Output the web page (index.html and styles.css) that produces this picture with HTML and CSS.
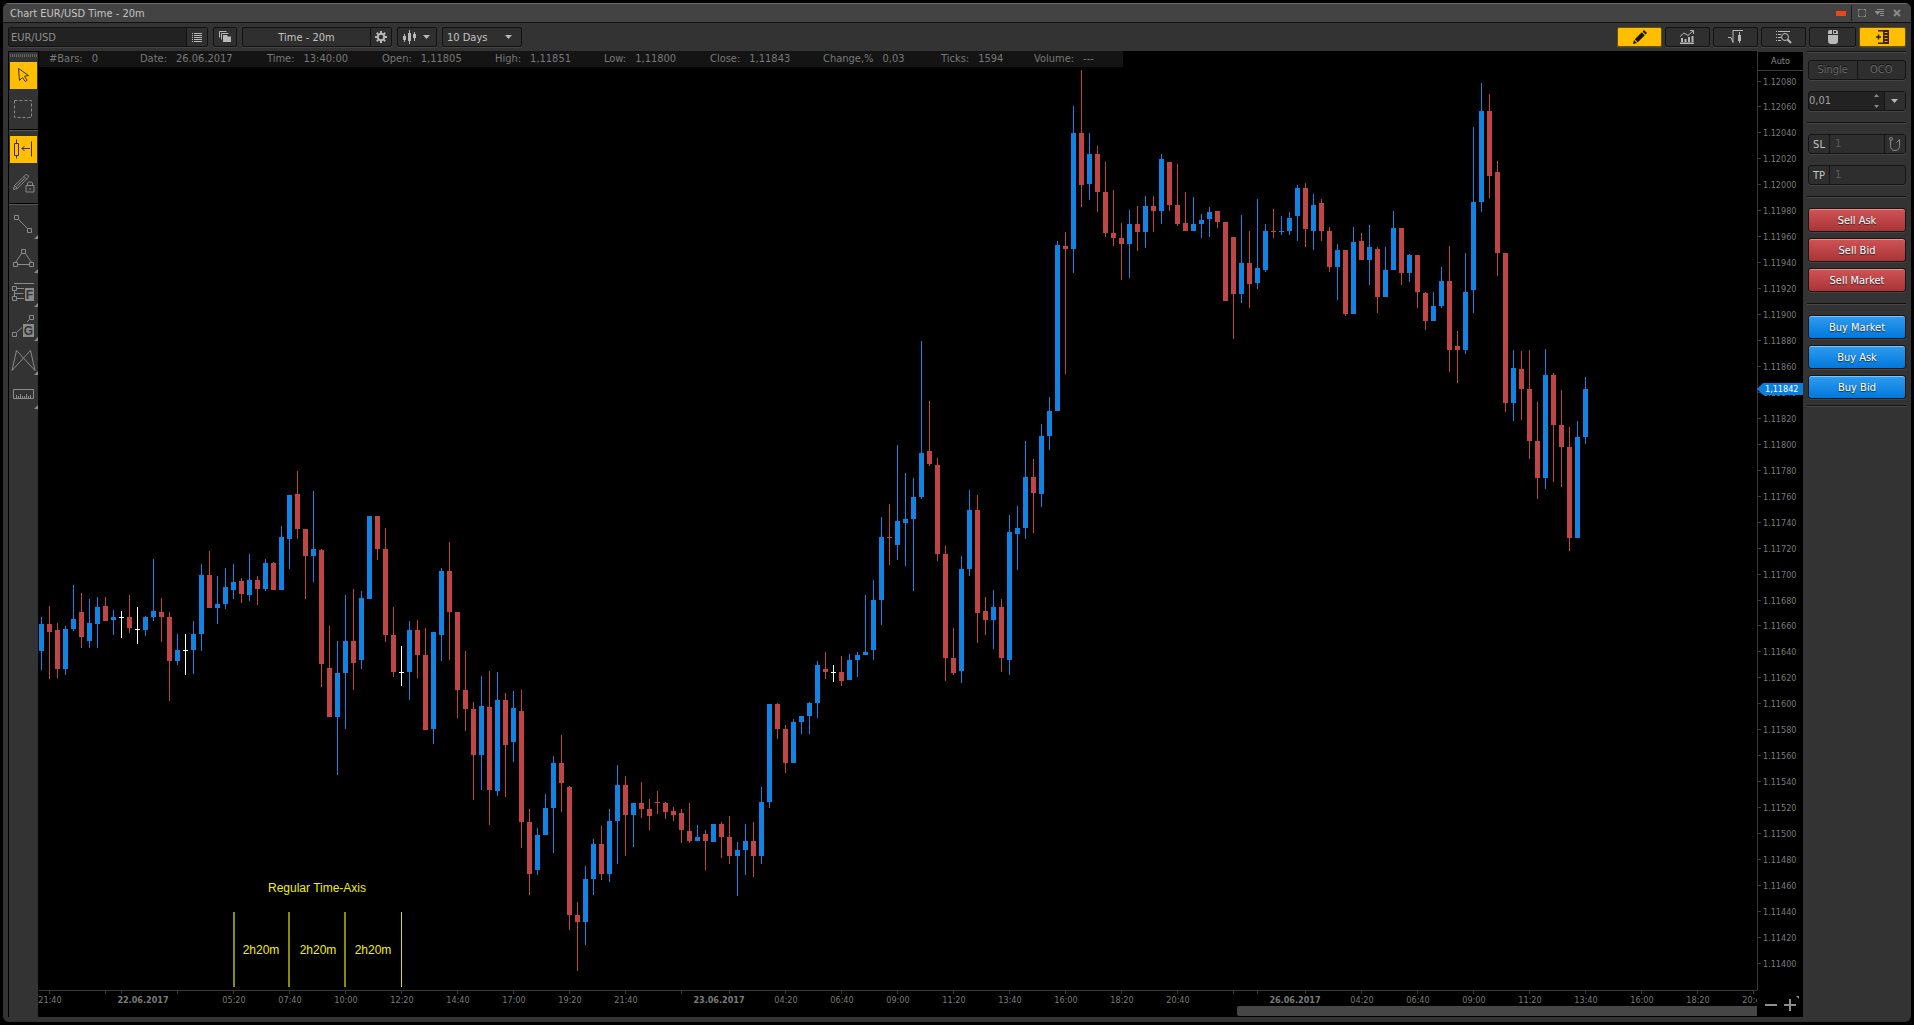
FILE: index.html
```html
<!DOCTYPE html>
<html lang="en">
<head>
<meta charset="utf-8">
<title>Chart EUR/USD Time - 20m</title>
<link rel="stylesheet" href="styles.css">
</head>
<body>
<div class="window">
  <header class="titlebar">
    <h1 class="title">Chart EUR/USD Time - 20m</h1>
    <div class="window-controls">
      <span class="link-color"></span>
      <button class="win-btn first" aria-label="Maximize"><svg width="8" height="8"><path d="M.5 2.500V.5h2M5.500.5h2v2M7.500 5.500v2h-2M2.500 7.500h-2v-2" class="line"/><path d="M3.500.5h1M3.500 7.500h1M.5 3.500v1M7.500 3.500v1" class="line"/></svg></button>
      <button class="win-btn menu" aria-label="Menu"><svg width="9" height="8"><path d="M2 .5h7M0 2.500h9M5 4.500h4M5 6.500h4" class="line"/><path d="M0 3h5L2.500 6z" class="solid"/></svg></button>
      <button class="win-btn" aria-label="Close"><svg width="8" height="8"><path d="M1 1l6 6M7 1L1 7" class="line thick"/></svg></button>
    </div>
  </header>

  <div class="toolbar">
    <div class="group symbol">
      <input class="field" type="text" value="EUR/USD" aria-label="Instrument">
      <button class="seg narrow" aria-label="Instrument list"><svg width="10" height="9"><path d="M0 .5h1M2 .5h8M0 2.500h1M2 2.500h8M0 4.500h1M2 4.500h8M0 6.500h1M2 6.500h8M0 8.500h1M2 8.500h8" class="line lit"/></svg></button>
    </div>
    <button class="btn small" aria-label="Templates"><svg width="12" height="12"><path d="M.5 6.500v-6h7M2.500 8.500v-6h7" class="line lit"/><path d="M4 4h4l1 1.500h3V11H4z" class="solid lit"/></svg></button>
    <div class="group period">
      <button class="seg wide">Time - 20m</button>
      <button class="seg narrow" aria-label="Settings"><svg width="12" height="12"><circle cx="6" cy="6" r="3.200" class="ring"/><path d="M6 0v2M6 10v2M0 6h2M10 6h2M1.800 1.800l1.400 1.400M8.800 8.800l1.400 1.400M10.200 1.800L8.800 3.200M3.200 8.800l-1.400 1.400" class="ring"/></svg></button>
    </div>
    <button class="btn style" aria-label="Chart style"><svg width="14" height="14"><path d="M1.500 4v8M6.500 0v14M11.500 2v9" class="line lit"/><path d="M0 6h3v4H0zM5 3h3v8H5zM10 4h3v4h-3z" class="solid lit"/></svg><svg width="8" height="4"><path d="M0 0h7L3.500 4z" class="solid lit"/></svg></button>
    <div class="group range">
      <select class="select" aria-label="Range"><option>10 Days</option></select>
      <svg class="select-arrow" width="8" height="4"><path d="M0 0h7L3.500 4z" class="solid lit"/></svg>
    </div>
    <div class="toolbar-right">
      <button class="btn tool active" aria-label="Draw"><svg width="14" height="14"><path d="M0 14l1-4 3 3zM1.800 9.200l7-7 3 3-7 7zM9.600 1.500L11 0l3 3-1.500 1.400z" fill="#1a1400"/></svg></button>
      <button class="btn tool" aria-label="Indicators"><svg width="16" height="14"><path d="M0 13.500h14M2 8v4M5.500 9v3M9 7v5M12.500 6v6" class="line lit thick"/><path d="M0 6.500L4 3l4 2.500L13 1M10 .5h3.500V4" class="line lit"/></svg></button>
      <button class="btn tool" aria-label="Strategies"><svg width="16" height="14"><path d="M0 7.500h3l2 5V.5h10M11.500 2v11" class="line lit"/><path d="M10 5h3v6h-3z" class="solid lit"/></svg></button>
      <button class="btn tool" aria-label="Analysis"><svg width="16" height="14"><path d="M0 1.500h1M2 1.500h12M0 4.500h1M2 4.500h3M0 7.500h1M2 7.500h3M0 10.500h1M2 10.500h3" class="line lit"/><circle cx="9" cy="7" r="3.500" class="line lit"/><path d="M11.500 9.500L15 13" class="line lit thick"/></svg></button>
      <button class="btn tool" aria-label="Mouse trading"><svg width="10" height="14"><path d="M0 2q0-2 2-2h2v4H0zM5 0h3q2 0 2 2v2H5zM0 5h10v6q0 3-3 3H3q-3 0-3-3z" class="solid lit"/><path d="M6 1h2v2H6z" fill="#2e2e2e"/></svg></button>
      <button class="btn tool active" aria-label="Order panel"><svg width="14" height="14"><path d="M0 7h5M2.500 4.500v5M2 .8h7M2 13.200h7" stroke="#332600" stroke-width="1.500" fill="none"/><path d="M7 0h6v14H7z" fill="#332600"/><path d="M8.500 2.500h3M8.500 5.500h3M8.500 8.500h3M8.500 11.500h3" stroke="#ff9d00"/></svg></button>
    </div>
  </div>

  <main class="workspace">
    <nav class="palette" aria-label="Drawing tools">
      <span class="grip"></span>
      <button class="pick active" aria-label="Select"><svg width="27" height="27"><path d="M8.500 6.500l10 7-4 .8 2.700 4-2 1.200-2.700-4-3 3z" class="ink"/></svg></button>
      <button class="pick" aria-label="Marquee"><svg width="27" height="27"><rect x="4.500" y="4.500" width="17" height="17" class="line" stroke-dasharray="3 2"/></svg></button>
      <hr class="rule">
      <button class="pick active" aria-label="Shift candles"><svg width="27" height="27"><path d="M4.500 7.500h4v12h-4zM6.500 3.500v4M6.500 19.500v3M12 12.500h8M14.500 10l-2.500 2.500 2.500 2.500M21.500 5.500v15" class="ink"/></svg></button>
      <button class="pick" aria-label="Lock drawings"><svg width="27" height="27"><path d="M3.500 19.500l1-4L15.500 5l1.500-.5 1.500 1.500-.5 1.500L7.500 18.500zM14 6.500l3 3M4.500 15.500l3 3M6.500 16.500l8-8" class="line"/><path d="M16 15.500h8v6.500h-8zM17.500 15.500V13q0-1 2.500-1t2.500 1v2.500M20 18v2" class="line badge"/></svg></button>
      <hr class="rule">
      <button class="pick more" aria-label="Lines"><svg width="29" height="34"><path d="M5.500 10.500h4v4h-4zM18.500 23.500h4v4h-4zM9.500 14.500l9 9" class="line"/><path d="M29 30v4h-4z" class="solid"/></svg></button>
      <button class="pick more" aria-label="Shapes"><svg width="29" height="34"><path d="M12.500 10.500h4v4h-4zM4.500 23.500h4v4h-4zM20.500 23.500h4v4h-4zM8.500 25.500h12M12.500 14.500l-6 9M16.500 14.500l6 9" class="line"/><path d="M29 30v4h-4z" class="solid"/></svg></button>
      <button class="pick more" aria-label="Fibonacci"><svg width="29" height="34"><path d="M5 10.500h20M3.500 13.500h4v4h-4zM3.500 23.500h4v4h-4zM5.500 17.500v6M5.500 20.500h9M8 15.500h7M8 25.500h7" class="line"/><path d="M16 15h9v13h-9zM29 30v4h-4z" class="solid"/><text x="20.500" y="26" class="glyph">F</text></svg></button>
      <button class="pick more" aria-label="Gann"><svg width="29" height="34"><path d="M20.500 8.500h4v4h-4zM3.500 25.500h4v4h-4zM8 25l5-4.500M18 15l2.500-2.500" class="line"/><path d="M14 17h11v13H14zM29 30v4h-4z" class="solid"/><text x="19.500" y="28" class="glyph">G</text></svg></button>
      <button class="pick more" aria-label="Patterns"><svg width="29" height="34"><path d="M3 29.500l4.500-20 18.500 20-4.500-20z" class="line"/><path d="M29 30v4h-4z" class="solid"/></svg></button>
      <button class="pick more" aria-label="Measure"><svg width="29" height="34"><path d="M4.500 14.500h20v9h-20zM7.500 20v3M9.500 21v2M11.500 19v4M13.500 21v2M15.500 21v2M17.500 19v4M19.500 21v2M21.500 20v3" class="line"/><path d="M29 30v4h-4z" class="solid"/></svg></button>
    </nav>

    <section class="plot">
      <dl class="bar-info">
        <div><dt>#Bars:</dt><dd>0</dd></div>
        <div><dt>Date:</dt><dd>26.06.2017</dd></div>
        <div><dt>Time:</dt><dd>13:40:00</dd></div>
        <div><dt>Open:</dt><dd>1,11805</dd></div>
        <div><dt>High:</dt><dd>1,11851</dd></div>
        <div><dt>Low:</dt><dd>1,11800</dd></div>
        <div><dt>Close:</dt><dd>1,11843</dd></div>
        <div><dt>Change,%</dt><dd>0,03</dd></div>
        <div><dt>Ticks:</dt><dd>1594</dd></div>
        <div><dt>Volume:</dt><dd>---</dd></div>
      </dl>
      <svg class="candles" id="candles" role="img" aria-label="EUR/USD candles"></svg>
      <div class="scroll"><div class="thumb"></div></div>
    </section>

    <aside class="price-axis">
      <button class="auto">Auto</button>
      <svg class="prices" id="prices"></svg>
      <div class="zoom-controls">
        <button aria-label="Zoom out"><svg width="13" height="16"><path d="M0 9h12" class="zoom-line"/></svg></button>
        <button aria-label="Zoom in"><svg width="16" height="16"><path d="M0 9h12M6 3v12" class="zoom-line"/><path d="M12 0h3v3z" class="solid"/></svg></button>
      </div>
    </aside>

    <aside class="orders">
      <hr>
      <div class="box modes"><button disabled>Single</button><button disabled>OCO</button></div>
      <div class="box amount">
        <input type="text" value="0,01" aria-label="Amount">
        <svg class="spin" width="16" height="18"><path d="M6 5h5L8.500 2zM6 13h5l-2.500 3z" class="solid"/></svg>
        <button aria-label="Presets"><svg width="8" height="4"><path d="M0 0h7L3.500 4z" class="solid lit"/></svg></button>
      </div>
      <hr>
      <div class="box off"><label for="sl">SL</label><input id="sl" type="text" value="1"><button aria-label="Trailing stop"><svg width="12" height="14"><circle cx="2" cy="2" r="1.500" class="line"/><path d="M1.500 3.500v5q0 5 4.500 5t4.500-5v-6l-3 3" class="line"/></svg></button></div>
      <div class="box off"><label for="tp">TP</label><input id="tp" type="text" value="1"></div>
      <hr>
      <div class="actions">
        <button class="sell">Sell Ask</button>
        <button class="sell">Sell Bid</button>
        <button class="sell">Sell Market</button>
      </div>
      <hr>
      <div class="actions last">
        <button class="buy">Buy Market</button>
        <button class="buy">Buy Ask</button>
        <button class="buy">Buy Bid</button>
      </div>
      <hr>
    </aside>
  </main>
</div>
<script src="chart.js"></script>
</body>
</html>
```

FILE: styles.css
```css
* { box-sizing: border-box; }

html, body { height: 100%; }

body {
  margin: 0;
  padding: 3px;
  background: #000;
  color: #c4c4c4;
  font: 11px/14px "DejaVu Sans Condensed", "Noto Sans", sans-serif;
}

button, input, select {
  margin: 0;
  padding: 0;
  border: 0;
  border-radius: 0;
  background: none;
  color: inherit;
  font: inherit;
}

svg { display: block; flex: none; }

.line { fill: none; stroke: #8a8a8a; }
.line.lit { stroke: #b8b8b8; }
.line.thick { stroke-width: 2; }
.line.badge { fill: #333; }
.solid { fill: #8a8a8a; }
.solid.lit { fill: #b8b8b8; }
.ring { fill: none; stroke: #b8b8b8; stroke-width: 2; }
.ink { fill: none; stroke: #3a3324; stroke-width: 1; }
.glyph { fill: #333; font: bold 12px "Liberation Sans", sans-serif; text-anchor: middle; }

.window {
  display: flex;
  flex-direction: column;
  height: 100%;
  padding-bottom: 5px;
  border-radius: 6px;
  background: #333;
  overflow: hidden;
}

/* Title bar */
.titlebar {
  display: flex;
  justify-content: space-between;
  align-items: center;
  height: 20px;
  padding: 0 6px 0 7px;
  border-top: 1px solid #6a6a6a;
  border-bottom: 1px solid #111;
  background: #434343;
}
.title { margin: 0; padding-top: 2px; font-size: 11px; font-weight: normal; }
.window-controls { display: flex; align-items: center; height: 100%; }
.link-color { width: 10px; height: 5px; margin-right: 5px; background: #ee461c; }
.win-btn { display: grid; place-items: center; width: 17px; height: 16px; }
.win-btn.first { width: 20px; border-left: 1px solid #1c1c1c; }

/* Toolbar */
.toolbar {
  display: flex;
  gap: 5px;
  height: 28px;
  padding: 4px 5px;
}
.btn, .group {
  display: flex;
  align-items: center;
  justify-content: center;
  height: 20px;
  border: 1px solid #121212;
  border-radius: 2px;
  background: #2f2f2f;
  box-shadow: 0 1px 0 #444;
}
.seg { display: grid; place-items: center; height: 18px; border-left: 1px solid #121212; }
.seg.narrow { width: 21px; }
.seg.wide { flex: 1; padding-top: 1px; border-left: 0; }
.symbol { width: 200px; }
.field { flex: 1; min-width: 0; height: 18px; padding-left: 2px; background: #222; color: #8e8e8e; }
.btn.small { width: 24px; }
.period { width: 150px; }
.btn.style { width: 40px; gap: 6px; }
.range { width: 80px; position: relative; }
.select { width: 100%; height: 18px; padding: 1px 0 0 4px; appearance: none; }
.select-arrow { position: absolute; right: 8px; top: 7px; pointer-events: none; }
.toolbar-right { display: flex; gap: 3px; margin-left: auto; }
.btn.tool { width: 45px; }
.btn.tool:nth-last-child(-n+2) { width: 47px; }
.btn.tool.active { border-color: #6b4f00; background: #ffbe00; }

/* Workspace */
.workspace { display: flex; flex: 1; min-height: 0; padding-left: 5px; }

.palette {
  display: flex;
  flex-direction: column;
  align-items: center;
  width: 30px;
  border-left: 1px solid #000;
  border-top: 1px solid #000;
  background: #333;
}
.grip {
  width: 27px;
  height: 3px;
  margin: 2px 0 5px;
  background: repeating-linear-gradient(90deg, #666 0 1px, transparent 1px 2px);
}
.pick { width: 27px; height: 27px; flex: none; }
.pick + .pick { margin-top: 7px; }
.pick.active { background: #ffbe00; }
.pick.more { width: 29px; height: 34px; margin-top: 0; }
.rule { width: 29px; height: 2px; margin: 6px 0 5px; border: 0; border-top: 1px solid #000; background: #555; flex: none; }
.rule:last-of-type { margin-bottom: 0; }

.plot { position: relative; display: flex; flex-direction: column; flex: 1; min-width: 0; background: #000; }
.candles { flex: 1; width: 100%; min-height: 0; }
.bar-info {
  position: absolute;
  top: 0;
  left: 1px;
  display: grid;
  grid-template-columns: 91px 127px 115px 113px 109px 106px 113px 118px 93px 89px;
  height: 16px;
  margin: 0;
  padding: 1px 0 0 10px;
  background: #141414;
  color: #787878;
}
.bar-info div { display: flex; gap: 9px; }
.bar-info dd { margin: 0; }
.scroll { display: flex; justify-content: flex-end; height: 11px; padding-bottom: 1px; }
.thumb { flex: 0 0 520px; max-width: 100%; border-radius: 2px 0 0 2px; background: #464646; }

.up { fill: #1084e0; }
.down { fill: #be4647; }
.flat { fill: #fff; }
.axis { fill: #3a3a3a; }
.axis-text { fill: #7a7a7a; font-size: 9px; }
.mid { text-anchor: middle; }
.date { font-weight: bold; }
.note { fill: #f0f000; font: 12px "Liberation Sans", Arial, sans-serif; text-anchor: middle; }
.mark { fill: #8c8c00; }
.mark.bright { fill: #dcdc00; }
.tag { fill: #0a80dc; }
.tag-text { fill: #fff; font-size: 9px; }

.price-axis { display: flex; flex-direction: column; width: 46px; background: #000; }
.auto { height: 20px; border-left: 1px solid #3a3a3a; border-top: 1px solid #333; border-bottom: 1px solid #3a3a3a; color: #8a8a8a; font-size: 9px; }
.prices { flex: 1; width: 100%; min-height: 0; }
.zoom-controls { display: flex; gap: 6px; height: 21px; padding-left: 8px; align-items: flex-start; }
.zoom-line { stroke: #8f8f8f; stroke-width: 2; }

/* Order panel */
.orders { width: 108px; padding: 0 5px 0 4px; }
.orders hr { height: 2px; margin: 11px 0 10px; border: 0; border-top: 1px solid #111; background: #484848; }
.orders hr:first-child { margin: 0 0 7px; }
.box {
  display: flex;
  height: 20px;
  margin-left: 1px;
  border: 1px solid #141414;
  border-radius: 3px;
  background: #2e2e2e;
  box-shadow: 0 1px 0 #444;
}
.box + .box { margin-top: 11px; }
.box input { flex: 1; min-width: 0; }
.modes button { flex: 1; color: #666; text-shadow: 0 -1px 0 #111; }
.modes button + button { border-left: 1px solid #141414; }
.amount { background: #222; color: #a0a0a0; }
.amount button, .off button { display: grid; place-items: center; width: 21px; border-left: 1px solid #141414; background: #2f2f2f; }
.off label { width: 21px; padding-top: 3px; border-right: 1px solid #141414; text-align: center; }
.off input { padding-left: 5px; color: #5c5c5c; }
.actions { display: grid; gap: 6px; margin-left: 1px; }
.actions.last + hr { margin-top: 6px; }
.actions button {
  height: 24px;
  padding-top: 1px;
  border: 1px solid #161616;
  border-radius: 3px;
  color: #fff;
  text-shadow: 0 1px 1px #222;
}
.sell { background: linear-gradient(#cf5457, #a93436); box-shadow: inset 0 1px 0 #ec8a8a, 0 1px 0 #444; }
.buy { background: linear-gradient(#319cf0, #0078dc); box-shadow: inset 0 1px 0 #7cc4ff, 0 1px 0 #444; }
```

FILE: chart.js
```js
// Candle rows: kind (u up, d down, f flat), high, body top, body bottom, low.
const rows = `
u617,624,651,670 d606,624,632,679 d623,630,669,678 u626,629,669,675 u585,619,629,631 d593,612,637,648
u599,623,641,648 u597,607,624,648 d597,606,621,621 u610,617,620,635 f611,617,618,638 d595,617,628,633
f607,629,630,644 u616,617,630,636 u559,611,617,621 d598,612,617,642 d612,617,661,701 u634,650,661,665
f634,650,651,675 u621,634,650,674 u564,575,634,651 d551,575,608,608 u576,604,608,624 u568,587,604,609
u564,582,590,599 d578,581,594,603 u554,580,595,601 d576,580,589,605 u559,563,589,591 d562,563,590,590
u526,537,590,590 u495,495,539,569 d471,494,529,539 d529,529,556,599 u491,549,556,582 d549,550,664,687
d626,668,717,717 u641,673,717,775 u595,641,673,729 d589,641,663,690 u591,598,660,669 u516,516,599,599
d516,516,549,560 d528,549,635,642 d607,635,672,677 f646,672,673,686 u621,630,672,700 d620,630,655,678
d628,655,730,730 u632,632,729,744 u568,571,635,661 d542,571,612,660 d612,612,690,718 d651,690,709,731
d702,709,755,800 u676,706,755,790 d671,707,790,825 u672,700,791,796 d693,700,745,797 u691,708,742,762
d690,711,822,848 d809,822,874,895 u828,835,870,875 u794,808,835,835 u756,763,808,853 d735,763,783,812
d786,787,915,930 d902,915,922,971 u866,879,922,945 u839,844,879,895 d826,844,874,880 u809,821,874,882
u765,785,821,864 d776,785,815,856 u803,803,815,847 d782,803,809,818 d799,809,816,830 d791,802,803,814
d802,803,812,819 d807,811,815,821 d809,813,830,843 d803,831,841,843 u825,837,841,841 d830,834,841,870
u824,824,842,842 d822,824,837,858 d816,837,856,864 u842,850,856,896 u824,841,850,875 d822,841,856,877
u787,802,856,864 u704,704,802,808 d703,704,729,739 d725,729,763,773 u719,722,763,763 u716,716,722,734
u702,703,716,734 u661,665,703,718 d652,669,672,679 f665,672,673,682 d656,672,681,686 u654,660,680,680
u652,655,660,677 u595,652,655,655 u580,600,650,660 u517,537,600,625 d504,537,538,565 u445,521,545,560
u473,519,523,566 u478,497,519,591 u341,453,497,499 d401,451,464,466 d458,465,554,561 d546,554,658,681
d628,658,673,675 u556,569,671,683 u490,510,569,576 d495,510,613,643 d597,611,620,635 u590,607,620,649
d599,607,658,672 u515,532,660,675 u506,528,534,570 u441,477,528,539 d459,477,493,533 u424,436,494,507
u397,411,436,450 u241,245,411,411 d232,246,249,374 u106,133,249,273 d70,133,185,207 u133,154,184,200
d146,154,192,212 d162,192,233,237 d190,233,238,246 d223,238,244,280 u210,224,244,278 d206,224,232,251
u196,206,232,248 d196,206,211,232 u154,159,211,224 d162,162,205,211 d164,205,224,226 d192,223,231,231
u197,224,231,231 u214,220,224,238 u207,212,219,237 d211,211,222,228 d222,222,301,301 d237,237,294,339
u215,263,294,303 d231,263,284,308 u199,268,283,289 u224,231,270,272 d209,231,232,238 u216,231,232,235
u212,218,231,235 u185,188,216,241 d183,188,229,247 u194,205,231,250 d199,203,231,241 d227,231,267,272
u244,250,267,300 d250,250,314,316 u227,242,314,314 d233,241,260,260 u225,247,260,285 d247,249,297,313
u247,270,297,297 u211,228,270,270 d228,228,273,285 u254,255,273,282 d255,255,292,308 d292,293,321,330
u292,306,321,321 u267,281,306,308 d246,281,350,372 d331,346,350,383 u253,292,350,354 u127,202,290,313
u83,111,202,212 d94,111,176,198 d161,172,253,276 d253,253,403,412 u350,368,403,421 d351,369,389,420
d350,389,441,459 d402,441,478,499 u349,375,478,489 d373,375,425,482 d390,425,447,487 d427,447,538,551
u421,437,538,538 u377,389,437,444`.trim().split(/\s+/);

const LEFT = 38;
const TOP = 51;
const PITCH = 8;
const names = { u: "up", d: "down", f: "flat" };

const rect = (cls, x, y, w, h) =>
  `<rect class="${cls}" x="${x}" y="${y}" width="${w}" height="${h}"/>`;
const text = (cls, x, y, s) => `<text class="${cls}" x="${x}" y="${y}">${s}</text>`;

let plot = "";
rows.forEach((row, i) => {
  const cls = names[row[0]];
  const [high, top, bottom, low] = row.slice(1).split(",").map(v => v - TOP);
  const x = 1 + i * PITCH;
  plot += rect(cls, x, top, 5, bottom - top) + rect(cls, x + 2, high, 1, low - high);
});

// Time axis
const axisY = 990 - TOP;
plot += rect("axis", 1, axisY, "100%", 1);
const times = [
  [49, "21:40"], [105], [121], [177], [233, "05:20"], [289, "07:40"], [345, "10:00"], [401, "12:20"],
  [457, "14:40"], [513, "17:00"], [569, "19:20"], [625, "21:40"], [681], [729], [785, "04:20"],
  [841, "06:40"], [897, "09:00"], [953, "11:20"], [1009, "13:40"], [1065, "16:00"], [1121, "18:20"],
  [1177, "20:40"], [1233], [1257], [1305], [1361, "04:20"], [1417, "06:40"], [1473, "09:00"],
  [1529, "11:20"], [1585, "13:40"], [1641, "16:00"], [1697, "18:20"], [1753, "20:40"]
];
for (const [x, label] of times) {
  plot += rect("axis", x - LEFT, axisY, 1, 4);
  if (label) plot += text("axis-text mid", x - LEFT + 1, axisY + 13, label);
}
for (const [x, label] of [[143, "22.06.2017"], [719, "23.06.2017"], [1295, "26.06.2017"]]) {
  plot += text("axis-text mid date", x - LEFT, axisY + 13, label);
}

// Annotation
plot += text("note", 317 - LEFT, 892 - TOP, "Regular Time-Axis");
for (const x of [233, 288, 344]) plot += rect("mark", x - LEFT, 912 - TOP, 2, 75);
plot += rect("mark bright", 401 - LEFT, 912 - TOP, 1, 75);
for (const x of [261, 318, 373]) plot += text("note", x - LEFT, 954 - TOP, "2h20m");
document.getElementById("candles").innerHTML = plot;

// Price axis
const axisTop = 71;
let prices = rect("axis", 0, 0, 1, 990 - axisTop);
for (let i = 0; i < 35; i++) {
  const y = Math.floor(81 + i * 25.95) - axisTop;
  prices += rect("axis", 1, y, 3, 1);
  prices += text("axis-text", 6, y + 4, ((112080 - i * 20) / 100000).toFixed(5));
}
prices += `<path class="tag" d="M0 318l6-6h40v12H6z"/>` + text("tag-text", 8, 321, "1,11842");
document.getElementById("prices").innerHTML = prices;
```
